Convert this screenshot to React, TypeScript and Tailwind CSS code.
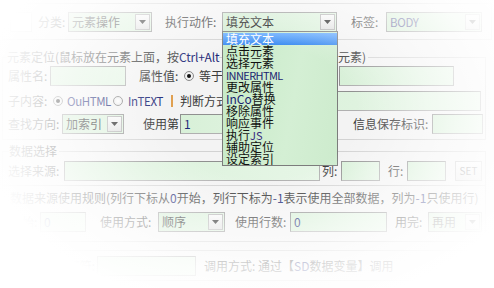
const CJK = "font-['Noto_Sans_CJK_SC','Liberation_Sans',sans-serif]";

function Arrow() {
  return (
    <div className="w-[15px] h-[16px] mr-[1px] flex items-center justify-center border border-[#b4b4b4] bg-[linear-gradient(#f8f8f8,#e1e1e1)]">
      <svg width="7" height="4" viewBox="0 0 7 4">
        <path d="M0 0h7L3.5 4z" fill="#222" />
      </svg>
    </div>
  );
}

function Select({ w, text, latin }: { w: string; text: string; latin?: boolean }) {
  return (
    <div className={`${w} h-[20px] shrink-0 flex items-center border border-[#9a9a9a] bg-[linear-gradient(90deg,#d3edd3,#dff3df)] pl-[3px]`}>
      <span className={`flex-1 ${latin ? "text-[#4a4a8a] text-[11.5px] tracking-[-0.3px]" : "text-[#222]"}`}>{text}</span>
      <Arrow />
    </div>
  );
}

function Field({ w, text }: { w: string; text?: string }) {
  return (
    <div className={`${w} h-[20px] shrink-0 flex items-center border border-[#b0b0b0] border-t-[#909090] border-l-[#909090] bg-[linear-gradient(90deg,#d8f0d8,#e6f6e6)] pl-[3px] text-[#1e2a78]`}>
      {text}
    </div>
  );
}

function Label({ w, children, className = "" }: { w: string; children: React.ReactNode; className?: string }) {
  return <span className={`${w} shrink-0 whitespace-nowrap text-[#3a3a3a] ${className}`}>{children}</span>;
}

function Radio({ on }: { on?: boolean }) {
  return (
    <span className="w-[10px] h-[10px] shrink-0 rounded-full border border-[#8a8a8a] bg-[radial-gradient(circle,#ffffff,#e4e4e4)] flex items-center justify-center">
      {on && <span className="w-[4px] h-[4px] rounded-full bg-[#111]" />}
    </span>
  );
}

const ITEMS = ["填充文本", "点击元素", "选择元素", "INNERHTML", "更改属性", "InCo替换", "移除属性", "响应事件", "执行JS", "辅助定位", "设定索引"];

function ItemText({ t }: { t: string }) {
  if (t === "INNERHTML") return <span className="text-[#1a2370] text-[11px] tracking-[-0.6px]">INNERHTML</span>;
  if (t === "InCo替换") return (<><span className="text-[#1a2370]">InCo</span>替换</>);
  if (t === "执行JS") return (<>执行<span className="text-[#3a2a80] text-[11px]">JS</span></>);
  return <>{t}</>;
}

export default function App() {
  return (
    <div className={`relative w-[494px] h-[288px] overflow-hidden bg-[#f3f3f3] text-[12px] leading-[14px] ${CJK}`}>
      <div className="flex flex-col px-[2px]">
        {/* top group */}
        <div className="mt-[3px] h-[37px] border border-[#d2d2d2] flex items-center">
          <div className="ml-[7px] w-[22px] h-[20px] shrink-0 border border-[#c8c8c8] bg-white" />
          <Label w="w-[28px]" className="ml-[6px]">分类:</Label>
          <div className="ml-[2px]"><Select w="w-[84px]" text="元素操作" /></div>
          <Label w="w-[55px]" className="ml-[13px]">执行动作:</Label>
          <div className="ml-[2px]"><Select w="w-[115px]" text="填充文本" /></div>
          <Label w="w-[33px]" className="ml-[14px]">标签:</Label>
          <div className="ml-[2px]"><Select w="w-[96px]" text="BODY" latin /></div>
        </div>

        {/* 元素定位 group: the middle of its caption sits under the open list */}
        <div className="relative mt-[17px] w-[484px] border border-[#d2d2d2] pt-[8px] pb-[5px] flex flex-col">
          <span className="absolute -top-[8px] left-[4px] bg-[#f3f3f3] text-[#3a3a3a] whitespace-nowrap">
            元素定位(鼠标放在元素上面，按<span className="text-[#1e2a78] tracking-[-0.2px]">Ctrl+Alt</span>
          </span>
          <span className="absolute -top-[8px] left-[335px] bg-[#f3f3f3] pr-[2px] text-[#3a3a3a] whitespace-nowrap">元素)</span>
          <div className="h-[20px] flex items-center">
            <Label w="w-[40px]" className="ml-[5px]">属性名:</Label>
            <div className="ml-[2px]"><Field w="w-[76px]" /></div>
            <Label w="w-[43px]" className="ml-[13px]">属性值:</Label>
            <span className="ml-[2px]"><Radio on /></span>
            <Label w="w-[140px]" className="ml-[5px]">等于</Label>
            <Field w="w-[115px]" />
          </div>
          <div className="mt-[5px] h-[20px] flex items-center">
            <Label w="w-[40px]" className="ml-[5px]">子内容:</Label>
            <span className="ml-[5px]"><Radio on /></span>
            <span className="ml-[4px] w-[42px] text-[11.5px] tracking-[-0.4px] text-[#1e2a78]">OuHTML</span>
            <span className="ml-[4px]"><Radio /></span>
            <span className="ml-[5px] w-[37px] text-[11.5px] tracking-[-0.3px] text-[#1e2a78]">InTEXT</span>
            <span className="ml-[6px] w-[2px] h-[12px] bg-[#e0a050]" />
            <Label w="w-[48px]" className="ml-[7px]">判断方式</Label>
            <Field w="w-[253px]" />
          </div>
          <div className="mt-[3px] h-[20px] flex items-center">
            <Label w="w-[52px]" className="ml-[5px]">查找方向:</Label>
            <div className="ml-[2px]"><Select w="w-[62px]" text="加索引" /></div>
            <Label w="w-[36px]" className="ml-[19px]">使用第</Label>
            <div className="ml-[1px]"><Field w="w-[150px]" text="1" /></div>
            <Label w="w-[78px]" className="ml-[23px]">信息保存标识:</Label>
            <div className="ml-[1px]"><Field w="w-[51px]" /></div>
          </div>
        </div>

        {/* 数据选择 group */}
        <div className="relative mt-[11px] w-[484px] border border-[#d2d2d2] pt-[9px] pb-[9px] flex flex-col">
          <span className="absolute -top-[8px] left-[6px] bg-[#f3f3f3] pr-[2px] text-[#3a3a3a]">数据选择</span>
          <div className="h-[20px] flex items-center">
            <Label w="w-[54px]" className="ml-[5px]">选择来源:</Label>
            <div className="ml-[2px]"><Field w="w-[256px]" /></div>
            <Label w="w-[17px]" className="ml-[2px]">列:</Label>
            <div className="ml-[2px]"><Field w="w-[39px]" /></div>
            <Label w="w-[17px]" className="ml-[8px]">行:</Label>
            <div className="ml-[2px]"><Field w="w-[39px]" /></div>
            <div className="ml-[9px] w-[27px] h-[20px] border border-[#c4c4c4] bg-[linear-gradient(#fafafa,#e6e6e6)] flex items-center justify-center text-[10px] text-[#777]">SET</div>
          </div>
          <div className="mt-[4px] h-px bg-[#d2d2d2]" />
          <div className="mt-[5px] h-[14px] pl-[7px] whitespace-nowrap text-[#3a3a3a]">
            数据来源使用规则(列行下标从<span className="text-[#1e2a78]">0</span>开始，列行下标为<span className="text-[#1e2a78]">-1</span>表示使用全部数据，列为<span className="text-[#1e2a78]">-1</span>只使用行)
          </div>
          <div className="mt-[7px] h-[20px] flex items-center">
            <Label w="w-[28px]" className="ml-[7px]">起始:</Label>
            <div className="ml-[2px]"><Field w="w-[46px]" text="0" /></div>
            <Label w="w-[55px]" className="ml-[14px]">使用方式:</Label>
            <div className="ml-[3px]"><Select w="w-[67px]" text="顺序" /></div>
            <Label w="w-[55px]" className="ml-[10px]">使用行数:</Label>
            <Field w="w-[97px]" text="0" />
            <Label w="w-[31px]" className="ml-[8px]">用完:</Label>
            <div className="ml-[2px]"><Select w="w-[54px]" text="再用" /></div>
          </div>
        </div>

        {/* bottom group */}
        <div className="mt-[8px] w-[484px] h-[31px] border border-[#d2d2d2] flex items-center">
          <Label w="w-[92px]" className="text-right">分隔符:</Label>
          <div className="ml-[2px]"><Field w="w-[99px]" /></div>
          <Label w="w-[200px]" className="ml-[8px]">调用方式: 通过【<span className="text-[#1e2a78]">SD</span>数据变量】调用</Label>
        </div>
      </div>

      {/* open dropdown list */}
      <div className="absolute left-[222px] top-[31px] w-[116px] h-[135px] border border-[#7c7c7c] bg-[linear-gradient(100deg,#c6eac6,#d4efd4_60%,#cdebcd)] flex flex-col py-[1px]">
        {ITEMS.map((t, i) => (
          <div
            key={t}
            className={`h-[12px] leading-[12px] pl-[3px] whitespace-nowrap ${i === 0 ? "bg-[linear-gradient(#6eb0ff,#3d8cf0)] text-white" : "text-[#111]"}`}
          >
            <ItemText t={t} />
          </div>
        ))}
      </div>

      {/* soft white vignette over the whole shot */}
      <div className="pointer-events-none absolute inset-0 bg-[radial-gradient(ellipse_285px_200px_at_262px_112px,rgba(255,255,255,0)_33%,rgba(255,255,255,0.5)_60%,rgba(255,255,255,0.85)_82%,#fff_100%)]" />
    </div>
  );
}
